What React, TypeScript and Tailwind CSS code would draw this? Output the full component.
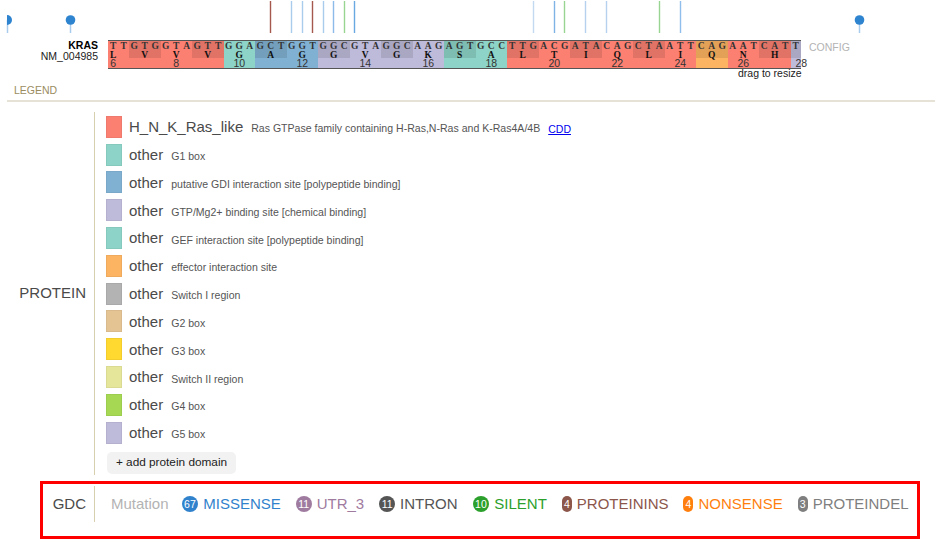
import React from 'react';

type Codon = {
  bases: string;
  aa: string;
  num?: string;
  shaded?: boolean;
  color: string;
};

const RED = 'bg-[#fb8072]';
const TEAL = 'bg-[#8dd3c7]';
const BLUE = 'bg-[#80b1d3]';
const PURPLE = 'bg-[#bebada]';
const ORANGE = 'bg-[#fdb462]';

const codons: Codon[] = [
  { bases: 'TT', aa: 'L', num: '6', color: RED },
  { bases: 'GTG', aa: 'V', shaded: true, color: RED },
  { bases: 'GTA', aa: 'V', num: '8', color: RED },
  { bases: 'GTT', aa: 'V', shaded: true, color: RED },
  { bases: 'GGA', aa: 'G', num: '10', color: TEAL },
  { bases: 'GCT', aa: 'A', shaded: true, color: BLUE },
  { bases: 'GGT', aa: 'G', num: '12', color: BLUE },
  { bases: 'GGC', aa: 'G', shaded: true, color: PURPLE },
  { bases: 'GTA', aa: 'V', num: '14', color: PURPLE },
  { bases: 'GGC', aa: 'G', shaded: true, color: PURPLE },
  { bases: 'AAG', aa: 'K', num: '16', color: PURPLE },
  { bases: 'AGT', aa: 'S', shaded: true, color: TEAL },
  { bases: 'GCC', aa: 'A', num: '18', color: TEAL },
  { bases: 'TTG', aa: 'L', shaded: true, color: RED },
  { bases: 'ACG', aa: 'T', num: '20', color: RED },
  { bases: 'ATA', aa: 'I', shaded: true, color: RED },
  { bases: 'CAG', aa: 'Q', num: '22', color: RED },
  { bases: 'CTA', aa: 'L', shaded: true, color: RED },
  { bases: 'ATT', aa: 'I', num: '24', color: RED },
  { bases: 'CAG', aa: 'Q', shaded: true, color: ORANGE },
  { bases: 'AAT', aa: 'N', num: '26', color: RED },
  { bases: 'CAT', aa: 'H', shaded: true, color: RED },
  { bases: 'T', aa: '', num: '28', shaded: true, color: PURPLE },
];

const domains = [
  { name: 'H_N_K_Ras_like', desc: 'Ras GTPase family containing H-Ras,N-Ras and K-Ras4A/4B', color: 'bg-[#fb8072]', cdd: true },
  { name: 'other', desc: 'G1 box', color: 'bg-[#8dd3c7]' },
  { name: 'other', desc: 'putative GDI interaction site [polypeptide binding]', color: 'bg-[#80b1d3]' },
  { name: 'other', desc: 'GTP/Mg2+ binding site [chemical binding]', color: 'bg-[#bebada]' },
  { name: 'other', desc: 'GEF interaction site [polypeptide binding]', color: 'bg-[#8dd3c7]' },
  { name: 'other', desc: 'effector interaction site', color: 'bg-[#fdb462]' },
  { name: 'other', desc: 'Switch I region', color: 'bg-[#b3b3b3]' },
  { name: 'other', desc: 'G2 box', color: 'bg-[#e5c494]' },
  { name: 'other', desc: 'G3 box', color: 'bg-[#ffd92f]' },
  { name: 'other', desc: 'Switch II region', color: 'bg-[#e6e69a]' },
  { name: 'other', desc: 'G4 box', color: 'bg-[#a6d854]' },
  { name: 'other', desc: 'G5 box', color: 'bg-[#bebada]' },
];

const mutations = [
  { count: '67', label: 'MISSENSE', badge: 'bg-[#3182cc]', text: 'text-[#3182cc]' },
  { count: '11', label: 'UTR_3', badge: 'bg-[#a07ba0]', text: 'text-[#a07ba0]' },
  { count: '11', label: 'INTRON', badge: 'bg-[#555555]', text: 'text-[#555555]' },
  { count: '10', label: 'SILENT', badge: 'bg-[#2ca02c]', text: 'text-[#2ca02c]' },
  { count: '4', label: 'PROTEININS', badge: 'bg-[#8c564b]', text: 'text-[#8c564b]' },
  { count: '4', label: 'NONSENSE', badge: 'bg-[#ff7f0e]', text: 'text-[#ff7f0e]' },
  { count: '3', label: 'PROTEINDEL', badge: 'bg-[#7f7f7f]', text: 'text-[#7f7f7f]' },
];

const ticks = [
  { x: 270.5, c: '#a5584e' },
  { x: 291.5, c: '#a9cbec' },
  { x: 302.5, c: '#a9cbec' },
  { x: 312.5, c: '#a5584e' },
  { x: 323.5, c: '#a9cbec' },
  { x: 333.5, c: '#8dbbe8' },
  { x: 344.5, c: '#98d492' },
  { x: 354.5, c: '#6aa8e2' },
  { x: 533.5, c: '#c2d9f0' },
  { x: 554.5, c: '#7fb3e6' },
  { x: 564.5, c: '#98d492' },
  { x: 585.5, c: '#b5d1ee' },
  { x: 606.5, c: '#b5d1ee' },
  { x: 659.5, c: '#98d492' },
  { x: 680.5, c: '#8fbdec' },
];

function Lollipops() {
  return (
    <svg width="936" height="40" className="block">
      {ticks.map((t) => (
        <line key={t.x} x1={t.x} x2={t.x} y1="1" y2="33" stroke={t.c} strokeWidth="1.4" />
      ))}
      {[7.5, 70.5, 859.5].map((x) => (
        <line key={x} x1={x} x2={x} y1="20" y2="33" stroke="#a9cbec" strokeWidth="1.5" />
      ))}
      <path d="M7 15 A5 5 0 0 1 7 25 Z" fill="#2f84d0" />
      <circle cx="70.5" cy="20" r="4.8" fill="#2f84d0" />
      <circle cx="859.5" cy="20" r="4.8" fill="#2f84d0" />
    </svg>
  );
}

function CodonCell({ codon }: { codon: Codon }) {
  const wide = codon.bases.length === 3 ? 'w-[31.5px]' : codon.bases.length === 2 ? 'w-[21px]' : 'w-[10.5px]';
  const last = codon.bases.length === 1;
  return (
    <div className={`${wide} ${codon.color} shrink-0`}>
      <div className={`h-[17px] ${codon.shaded ? 'bg-black/10' : ''}`}>
        <div className="flex h-[10px] items-end font-['Liberation_Serif',serif] text-[9.5px] font-bold leading-none text-[#333]">
          {codon.bases.split('').map((b, i) => (
            <span key={i} className="w-[10.5px] text-center">{b}</span>
          ))}
        </div>
        <div
          className={`h-[7px] font-['Liberation_Serif',serif] text-[9.5px] font-bold leading-[8px] text-[#111] ${
            codon.bases.length === 2 ? 'w-[10.5px] text-center' : 'text-center'
          }`}
        >
          {codon.aa}
        </div>
      </div>
      <div
        className={`h-[10px] whitespace-nowrap text-[10.5px] leading-[10px] text-[#333] ${
          last ? 'pl-[5px]' : codon.bases.length === 2 ? 'w-[10.5px] text-center' : 'text-center'
        }`}
      >
        {codon.num}
      </div>
    </div>
  );
}

function TranscriptRow() {
  return (
    <div className="relative flex h-[30px] items-start">
      <div className="w-[98px] shrink-0 text-right text-[10.5px] leading-[11px] text-[#222]">
        <div className="font-bold text-black">KRAS</div>
        <div>NM_004985</div>
      </div>
      <div className="ml-[10px] flex w-[693px] shrink-0 border-y-[1.5px] border-[#555]">
        {codons.map((c, i) => (
          <CodonCell key={i} codon={c} />
        ))}
      </div>
      <div className="ml-[8px] pt-[1px] text-[10.5px] leading-[12px] text-[#b3b3b3]">CONFIG</div>
      <div className="absolute left-[738px] top-[26.5px] text-[10.5px] leading-[12px] text-[#222]">drag to resize</div>
    </div>
  );
}

function DomainRow({ d }: { d: (typeof domains)[number] }) {
  return (
    <div className="flex h-[27.8px] items-center">
      <div className={`h-[22px] w-[16px] shrink-0 ${d.color} border border-black/5`} />
      <span className="ml-[7px] pt-[0.5px] text-[15px] leading-[22px] text-[#4a4a4a]">{d.name}</span>
      <span className="ml-[8px] pt-[5px] text-[10.55px] text-[#555]">{d.desc}</span>
      {d.cdd && <a className="ml-[8px] pt-[5px] text-[10.5px] text-[#0000ee] underline">CDD</a>}
    </div>
  );
}

export default function App() {
  return (
    <div className="h-[540px] w-[936px] overflow-hidden bg-white font-['Liberation_Sans',Arial,sans-serif]">
      <Lollipops />
      <TranscriptRow />

      <div className="ml-[14px] mt-[14px] text-[10.5px] leading-[12px] text-[#9a8c5f]">LEGEND</div>
      <div className="ml-[7px] mt-[4px] h-[2px] w-[928px] bg-[#e6e2d6]" />

      {/* Protein legend */}
      <div className="mt-[10px] flex h-[363px]">
        <div className="flex w-[86px] shrink-0 items-center justify-end text-[15px] text-[#4a4a4a]">PROTEIN</div>
        <div className="ml-[8px] w-[1px] shrink-0 bg-[#d8cfae]" />
        <div className="ml-[11px] pt-[1px]">
          {domains.map((d, i) => (
            <DomainRow key={i} d={d} />
          ))}
          <button className="ml-[1px] mt-[5.5px] h-[22px] w-[129px] rounded-[5px] bg-[#f2f2f2] text-center text-[11.8px] text-[#222]">
            + add protein domain
          </button>
        </div>
      </div>

      {/* GDC track, highlighted */}
      <div className="ml-[40px] mt-[6px] flex h-[58px] w-[880px] border-[3px] border-[#ff0000] pt-[2px]">
        <div className="flex h-[36px] w-[43px] shrink-0 items-center justify-end text-[15px] text-[#4a4a4a]">GDC</div>
        <div className="ml-[8px] h-[36px] w-[1px] shrink-0 bg-[#d8cfae]" />
        <div className="ml-[16px] flex h-[36px] items-center gap-[15px] whitespace-nowrap text-[15px]">
          <span className="text-[#b3b3b3]">Mutation</span>
          <div className="ml-[-2px] flex items-center gap-[15px]">
            {mutations.map((m) => (
              <div key={m.label} className="flex items-center gap-[5px]">
                <span
                  className={`flex h-[16px] min-w-[10px] items-center justify-center rounded-full text-[10.5px] leading-none text-white ${
                    m.count.length > 1 ? 'px-[2.5px]' : 'px-[2px]'
                  } ${m.badge}`}
                >
                  {m.count}
                </span>
                <span className={m.text}>{m.label}</span>
              </div>
            ))}
          </div>
        </div>
      </div>
    </div>
  );
}
